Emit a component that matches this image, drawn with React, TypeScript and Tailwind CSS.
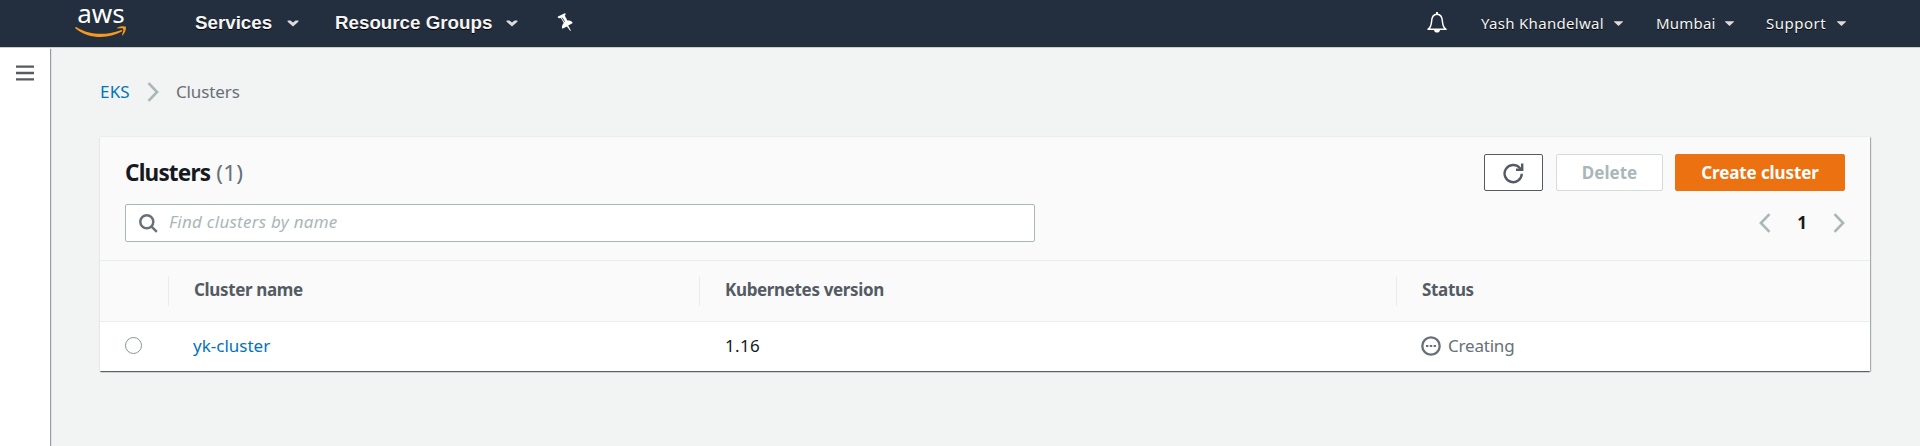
import type { ReactNode } from "react";

function Chevron({ left = false, className = "" }: { left?: boolean; className?: string }) {
  return (
    <svg className={`shrink-0 ${className}`} width="12" height="20" viewBox="0 0 12 20" fill="none" stroke="#aab7b8" strokeWidth="2.6">
      <path d={left ? "M10.5 1.2 1.9 10l8.6 8.8" : "M1.5 1.2 10.1 10l-8.6 8.8"} />
    </svg>
  );
}

function NavCaret() {
  return (
    <svg className="shrink-0" width="12" height="7" viewBox="0 0 12 7" fill="#dcdcdc">
      <path d="M.6.6h2.8L6 2.6 8.6.6h2.8v1.2L6 6.4.6 1.8Z" />
    </svg>
  );
}

function MenuCaret() {
  return (
    <svg className="shrink-0" width="9" height="5" viewBox="0 0 9 5" fill="#dcdcdc">
      <path d="M0 .2h9v.6L4.5 5 0 .8Z" />
    </svg>
  );
}

function Logo() {
  return (
    <div className="flex w-[52px] shrink-0 flex-col items-center">
      <span className="h-[24px] font-['Noto_Sans',sans-serif] text-[26px] leading-[22px] text-white">aws</span>
      <svg width="52" height="12" viewBox="0 0 52 12" className="block">
        <path d="M.3 1.6C.6.9 1.3 1 2 1.5 14.500 9.200 31 9.600 45.800 4.200c1.200-.4 2 .6 1 1.400C33 13.800 12.500 12.600.6 2.400.3 2.100.1 1.900.3 1.600Z" fill="#f7981f" />
        <path d="M42.500 1.500C45.500-.3 50 0 50.700.7c.8 1-.3 6-3 8.500-.5.400-.9.100-.7-.5 1-2.300 1.700-5 1.200-5.800-.5-.7-3.200-.6-5.300-.4-.7.100-.8-.6-.4-1Z" fill="#f7981f" />
      </svg>
    </div>
  );
}

function Header() {
  const nav = "font-['Liberation_Sans',Arial,sans-serif] text-[18.75px] font-bold leading-[23px] pb-[3px] whitespace-nowrap";
  const menu = "text-[15px] leading-[22px] pb-[2px] whitespace-nowrap";
  return (
    <header className="flex h-[47px] shrink-0 items-center bg-[#232f3e] pl-[75px] text-[#f4f4f4]">
      <div className="self-start pt-[2px]">
        <Logo />
      </div>
      <nav className="flex grow items-center [text-shadow:0_1px_0_#000]">
        <div className="ml-[68px] flex w-[140px] items-center gap-[15px]">
          <span className={nav}>Services</span>
          <NavCaret />
        </div>
        <div className="flex w-[222px] items-center gap-[14px]">
          <span className={nav}>Resource Groups</span>
          <NavCaret />
        </div>
        <svg width="17" height="19" viewBox="0 0 17 19" fill="#fff" className="mb-[3px]">
          <path d="M1 3.600 7.700.3c.8-.2 1.300.9.700 1.600l-.7.700 2.700 4.900c1.800-.3 4 .4 5 1.700.3.600.1 1-.4 1.300l-3.800 2.100 2.700 5-.6.500-3.400-4.700-4 2c-.6.300-1 .1-1-.6 0-1.900.6-3.700 1.900-4.900L3.900 5.100c-1 .3-2.200.2-3-.3-.4-.4-.3-.900.1-1.200Z" />
          <path d="m5.200 4.700 2.400 4.100" stroke="#232f3e" strokeWidth=".9" />
        </svg>
      </nav>
      <div className="flex items-center pr-[74px] [text-shadow:0_1px_0_#000]">
        <svg width="20" height="21" viewBox="0 0 20 21" fill="none" stroke="#fff" strokeWidth="1.500" className="mr-[34px] mb-[3px]">
          <path d="M1 17.300c2.600-1.900 3.300-4 3.500-7.300C4.700 5.500 6 2.300 10 2.300s5.300 3.200 5.500 7.700c.2 3.300.9 5.400 3.500 7.300Z" strokeLinejoin="round" />
          <path d="M10 0v2.300" strokeWidth="2" />
          <path d="M7 18h6c-.3 1.800-1.500 2.600-3 2.600S7.300 19.800 7 18Z" fill="#fff" stroke="none" />
        </svg>
        <div className="flex w-[176px] items-center justify-between pr-[34px]">
          <span className={`${menu} tracking-[0.3px]`}>Yash Khandelwal</span>
          <MenuCaret />
        </div>
        <div className="flex w-[110px] items-center justify-between pr-[33px]">
          <span className={`${menu} -ml-px tracking-[0.200px]`}>Mumbai</span>
          <MenuCaret />
        </div>
        <div className="flex w-[79px] items-center justify-between">
          <span className={`${menu} -ml-px tracking-[0.5px]`}>Support</span>
          <MenuCaret />
        </div>
      </div>
    </header>
  );
}

function HeadCell({ children }: { children: ReactNode }) {
  return (
    <div className="flex h-[30px] items-center border-l border-[#eaeded] pb-[2px] pl-[25px] font-bold tracking-[-0.350px] text-[#545b64]">
      {children}
    </div>
  );
}

function Toolbar() {
  const button = "flex h-[37px] items-center justify-center rounded-[2px] border font-bold";
  return (
    <div className="h-[124px] border-b border-[#eaeded] px-[25px] pt-[17px]">
      <div className="flex h-[37px] items-center">
        <h1 className="text-[22.500px] leading-[30px] font-bold tracking-[-0.8px] text-[#16191f]">
          Clusters <span className="ml-px font-normal tracking-[0.200px] text-[#687078]">(1)</span>
        </h1>
        <button className={`${button} ml-auto w-[59px] border-[#545b64] bg-white`}>
          <svg width="21" height="21" viewBox="0 0 21 21" fill="none" stroke="#545b64" strokeWidth="2.400" className="mt-px">
            <path d="M18.800 10.800A8.600 8.600 0 1 1 16.600 4.800L18.200 6.600" />
            <path d="M19.200.5V6.700H13" />
          </svg>
        </button>
        <button className={`${button} ml-[13px] w-[107px] border-[#d5dbdb] bg-white text-[#aab7b8]`}>Delete</button>
        <button className={`${button} ml-[12px] w-[170px] border-[#ec7211] bg-[#ec7211] tracking-[-0.100px] text-white`}>Create cluster</button>
      </div>
      <div className="mt-[13px] flex h-[38px] items-center justify-between">
        <label className="flex h-full w-[910px] items-center rounded-[2px] border border-[#aab7b8] bg-white pl-[13px]">
          <svg width="19" height="19" viewBox="0 0 19 19" fill="none" stroke="#687078" strokeWidth="2.500">
            <circle cx="7.800" cy="7.800" r="6.500" />
            <path d="m12.300 12.300 5.500 5.500" />
          </svg>
          <input
            placeholder="Find clusters by name"
            className="ml-[11px] mb-[2px] w-[800px] bg-transparent tracking-[0.250px] outline-none placeholder:text-[#aab7b8] placeholder:italic"
          />
        </label>
        <div className="flex items-center">
          <Chevron left />
          <span className="w-[62px] pb-px text-center font-bold text-[#16191f]">1</span>
          <Chevron />
        </div>
      </div>
    </div>
  );
}

const columns = "grid grid-cols-[68px_531px_697px_1fr] items-center";

export default function App() {
  return (
    <div className="flex h-[446px] w-[1920px] flex-col bg-[#f2f3f3] font-['Noto_Sans',sans-serif] text-[17px] leading-[24px]">
      <Header />
      <div className="flex grow border-t border-[#c9cdcf]">
        <aside className="w-[50px] shrink-0 bg-white pt-[17px] pl-[16px] shadow-[1px_1px_1px_0_rgba(0,28,36,0.4)]">
          <svg width="18" height="16" viewBox="0 0 18 16" stroke="#545b64" strokeWidth="2.300">
            <path d="M0 1.600h18M0 8h18M0 14.400h18" />
          </svg>
        </aside>
        <main className="grow pr-[50px] pl-[50px]">
          <div className="flex h-[88px] items-center pb-px">
            <a className="tracking-[0.200px] text-[#0073bb]">EKS</a>
            <Chevron className="mx-[17px]" />
            <span className="text-[#687078] tracking-[-0.100px]">Clusters</span>
          </div>
          <section className="mt-px h-[234px] bg-[#fafafa] shadow-[0_1px_1px_0_rgba(0,28,36,0.3),1px_1px_1px_0_rgba(0,28,36,0.15),0_2px_1px_-1px_rgba(0,28,36,0.4),0_-1px_0_0_#eaeded,1px_0_1px_0_rgba(0,28,36,0.15)]">
            <Toolbar />
            <div className={`${columns} h-[61px] border-b border-[#eaeded]`}>
              <span />
              <HeadCell>Cluster name</HeadCell>
              <HeadCell>Kubernetes version</HeadCell>
              <HeadCell>Status</HeadCell>
            </div>
            <div className={`${columns} h-[49px] bg-white pb-px`}>
              <span className="mb-px ml-[25px] size-[17px] rounded-full border border-[#879596]" />
              <a className="pl-[25px] text-[#0073bb]">yk-cluster</a>
              <span className="pl-[26px] tracking-[0.300px] text-[#16191f]">1.16</span>
              <span className="flex items-center gap-[7px] pl-[25px] tracking-[-0.200px] text-[#687078]">
                <svg width="20" height="20" viewBox="0 0 20 20" fill="none" stroke="#687078">
                  <circle cx="10" cy="10" r="8.700" strokeWidth="2.300" />
                  <path d="M5 10h10" strokeWidth="2.200" strokeDasharray="2.400 1.400" />
                </svg>
                Creating
              </span>
            </div>
          </section>
        </main>
      </div>
    </div>
  );
}
